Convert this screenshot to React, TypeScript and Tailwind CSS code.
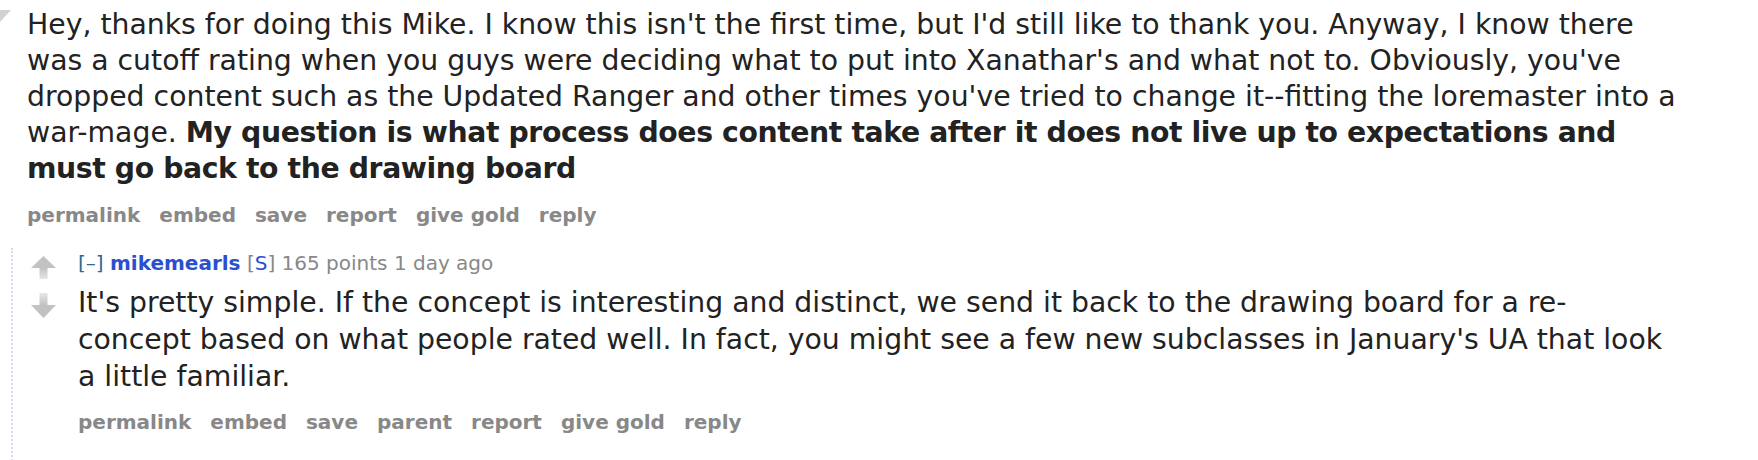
import React from "react";

function UpArrow() {
  return (
    <svg width="25" height="23" viewBox="0 0 25 23" className="block">
      <defs>
        <linearGradient id="upg" x1="0" y1="0" x2="0" y2="1">
          <stop offset="0" stopColor="#c2c2c2" />
          <stop offset="1" stopColor="#e6e6e6" />
        </linearGradient>
      </defs>
      <polygon points="12.5,0 25,12 0,12" fill="#c2c2c2" />
      <rect x="8.5" y="12" width="8" height="11" fill="url(#upg)" />
    </svg>
  );
}

function DownArrow() {
  return (
    <svg width="25" height="25" viewBox="0 0 25 25" className="block">
      <defs>
        <linearGradient id="dng" x1="0" y1="0" x2="0" y2="1">
          <stop offset="0" stopColor="#e6e6e6" />
          <stop offset="1" stopColor="#c2c2c2" />
        </linearGradient>
      </defs>
      <rect x="8.5" y="0" width="8" height="12" fill="url(#dng)" />
      <polygon points="0,12 25,12 12.5,25" fill="#c2c2c2" />
    </svg>
  );
}

function Buttons({ items }: { items: string[] }) {
  return (
    <ul className="flex gap-[19px] text-[20px] leading-[24px] font-bold text-[#888]">
      {items.map((t) => (
        <li key={t} className="whitespace-nowrap">
          {t}
        </li>
      ))}
    </ul>
  );
}

export default function App() {
  return (
    <div className="w-[1758px] h-[460px] bg-white overflow-hidden font-['DejaVu_Sans','Verdana',sans-serif] text-[#222]">
      <div className="flex">
        <div className="w-[27px] shrink-0">
          <svg width="12" height="26" viewBox="0 0 12 26" className="block">
            <polygon points="0,10 11,10 0,22" fill="#d2d2d2" />
          </svg>
        </div>
        <div className="w-[1649px]">
          <p className="pt-[7px] text-[28.3px] leading-[36px]">
            Hey, thanks for doing this Mike. I know this isn't the first time, but I'd still like to thank you. Anyway, I know there was a cutoff rating when you guys were deciding what to put into Xanathar's and what not to. Obviously, you've dropped content such as the Updated Ranger and other times you've tried to change it--fitting the loremaster into a war-mage.{" "}
            <strong className="font-bold tracking-[-0.4px]">
              My question is what process does content take after it does not live up to expectations and must go back to the drawing board
            </strong>
          </p>
          <div className="mt-[16px]">
            <Buttons items={["permalink", "embed", "save", "report", "give gold", "reply"]} />
          </div>
        </div>
      </div>

      <div className="mt-[21px] ml-[11px] border-l-2 border-dotted border-[#d8d8ee] h-[300px]">
        <div className="flex">
          <div className="ml-[18px] mr-[22px] w-[25px] shrink-0 pt-[8px] flex flex-col gap-[14px]">
            <UpArrow />
            <DownArrow />
          </div>
          <div className="w-[1598px]">
            <p className="pt-[3px] text-[20px] leading-[24px] text-[#888]">
              <span className="text-[#369]">[–]</span>{" "}
              <span className="font-bold text-[#2a50d0]">mikemearls</span>{" "}
              <span>
                [<span className="text-[#2a50d0]">S</span>]
              </span>{" "}
              165 points 1 day ago
            </p>
            <p className="mt-[9px] text-[28.3px] leading-[37px]">
              It's pretty simple. If the concept is interesting and distinct, we send it back to the drawing board for a re-concept based on what people rated well. In fact, you might see a few new subclasses in January's UA that look a little familiar.
            </p>
            <div className="mt-[15px]">
              <Buttons items={["permalink", "embed", "save", "parent", "report", "give gold", "reply"]} />
            </div>
          </div>
        </div>
      </div>
    </div>
  );
}
